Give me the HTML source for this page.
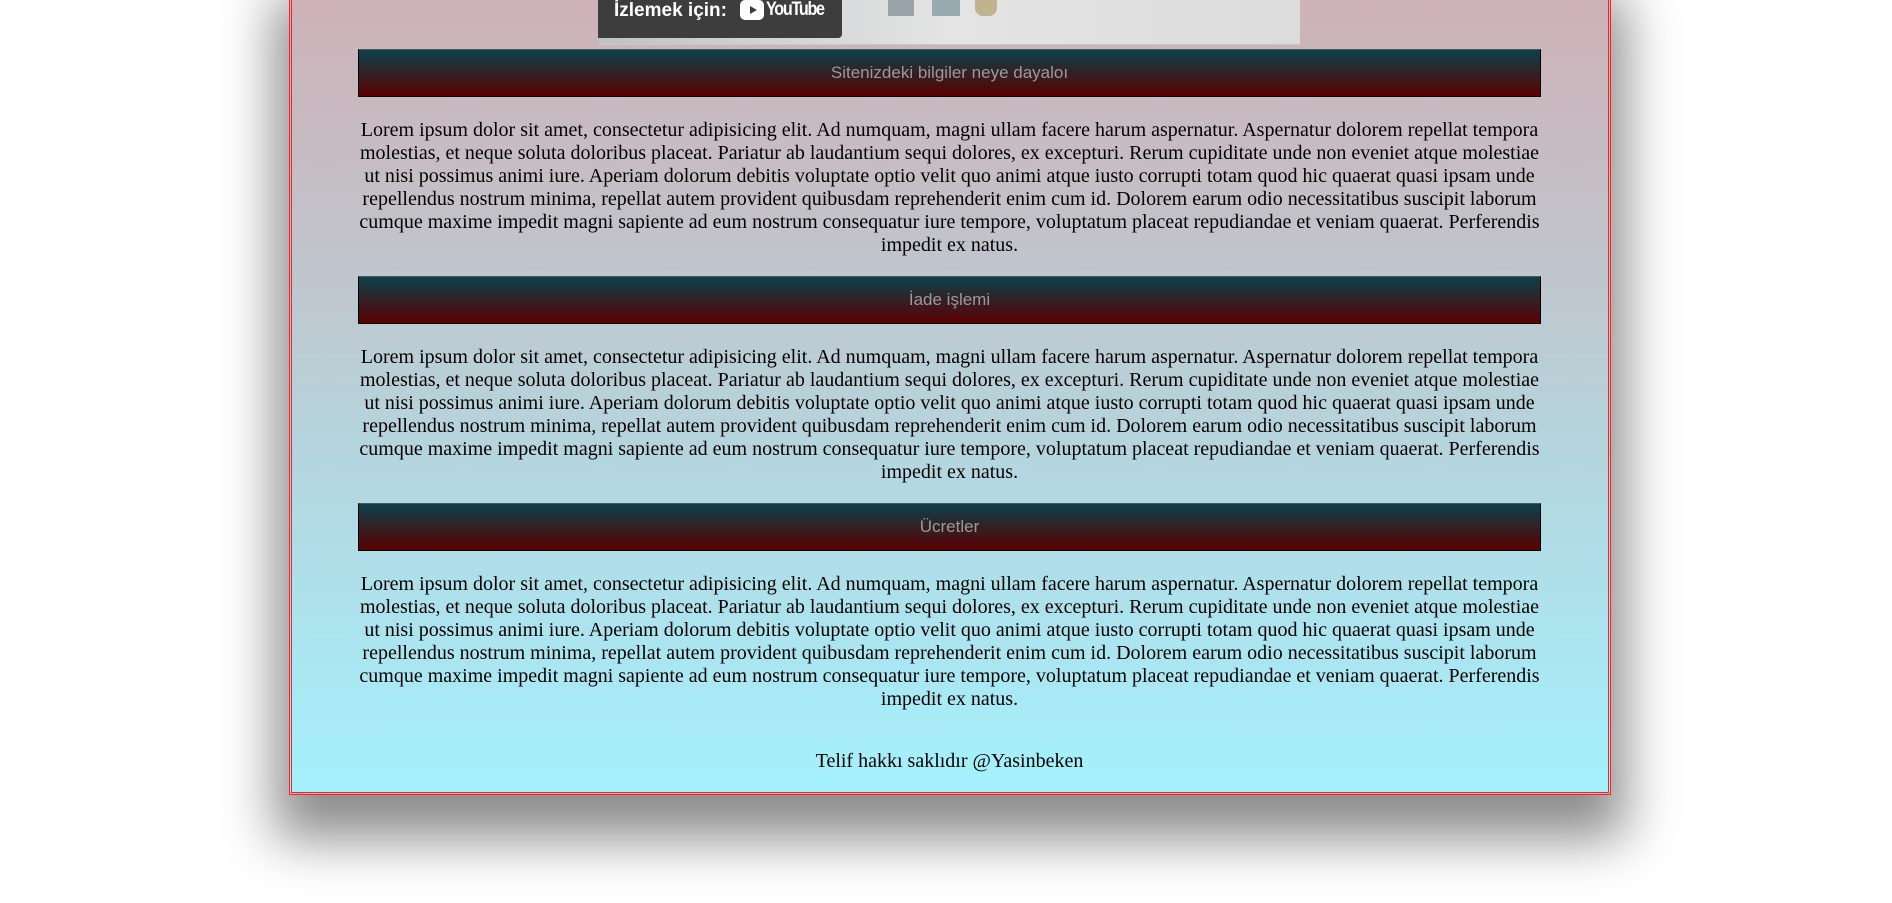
<!DOCTYPE html>
<html><head><meta charset="utf-8"><style>
html,body{margin:0;padding:0;width:1892px;height:903px;overflow:hidden;background:#fff;}
.box{position:absolute;left:289px;top:-20px;width:1316px;height:809px;border:3px double #f22;
background:linear-gradient(to bottom,#ceb0b6 0px,#c2c3ca 260px,#b4d6df 480px,#a4f1fd 809px);
box-shadow:0 30px 50px 14px rgba(0,0,0,0.45);}
.bar{position:absolute;left:358px;width:1181px;height:46px;border:1px solid #000;border-top-color:#555;
background:linear-gradient(to bottom,#0b414a,#5a0000);color:#9a9a9a;font:17px "Liberation Sans",sans-serif;
text-align:center;line-height:46px;}
.p{position:absolute;left:356px;width:1187px;font:20px/22.9px "Liberation Serif",serif;text-align:center;color:#000;}
.thumb{position:absolute;left:598px;top:0;width:702px;height:44px;background:linear-gradient(to right,#bfc2c4,#e4e4e4 50%,#dcdcdc);border-bottom:1px solid #c8c8c8;}
.btn{position:absolute;left:598px;top:0;width:244px;height:38px;background:#3d3d3d;border-radius:0 0 4px 0;color:#fff;font:bold 19px "Liberation Sans",sans-serif;}
</style></head><body>
<div class="box"></div>
<div class="thumb">
<div style="position:absolute;left:290px;top:0;width:26px;height:16px;background:#9aa2aa;"></div>
<div style="position:absolute;left:334px;top:0;width:28px;height:16px;background:#98aab0;"></div>
<div style="position:absolute;left:377px;top:0;width:22px;height:16px;background:#c0b490;border-radius:0 0 8px 8px;"></div>
</div>
<div class="btn"><span style="position:absolute;left:16px;top:0px;">İzlemek için:</span>
<span style="position:absolute;left:142px;top:0px;width:24px;height:20px;background:#fff;border-radius:5px;"></span>
<span style="position:absolute;left:152px;top:6px;width:0;height:0;border-left:7px solid #3d3d3d;border-top:4px solid transparent;border-bottom:4px solid transparent;"></span>
<span style="position:absolute;left:168px;top:-1px;font-size:19px;letter-spacing:-1.5px;transform:scaleX(0.85);transform-origin:left;">YouTube</span></div>

<div class="bar" style="top:49px">Sitenizdeki bilgiler neye dayalоı</div>
<div class="p" style="top:119px">Lorem ipsum dolor sit amet, consectetur adipisicing elit. Ad numquam, magni ullam facere harum aspernatur. Aspernatur dolorem repellat tempora molestias, et neque soluta doloribus placeat. Pariatur ab laudantium sequi dolores, ex excepturi. Rerum cupiditate unde non eveniet atque molestiae ut nisi possimus animi iure. Aperiam dolorum debitis voluptate optio velit quo animi atque iusto corrupti totam quod hic quaerat quasi ipsam unde repellendus nostrum minima, repellat autem provident quibusdam reprehenderit enim cum id. Dolorem earum odio necessitatibus suscipit laborum cumque maxime impedit magni sapiente ad eum nostrum consequatur iure tempore, voluptatum placeat repudiandae et veniam quaerat. Perferendis impedit ex natus.</div>
<div class="bar" style="top:276px">İade işlemi</div>
<div class="p" style="top:346px">Lorem ipsum dolor sit amet, consectetur adipisicing elit. Ad numquam, magni ullam facere harum aspernatur. Aspernatur dolorem repellat tempora molestias, et neque soluta doloribus placeat. Pariatur ab laudantium sequi dolores, ex excepturi. Rerum cupiditate unde non eveniet atque molestiae ut nisi possimus animi iure. Aperiam dolorum debitis voluptate optio velit quo animi atque iusto corrupti totam quod hic quaerat quasi ipsam unde repellendus nostrum minima, repellat autem provident quibusdam reprehenderit enim cum id. Dolorem earum odio necessitatibus suscipit laborum cumque maxime impedit magni sapiente ad eum nostrum consequatur iure tempore, voluptatum placeat repudiandae et veniam quaerat. Perferendis impedit ex natus.</div>
<div class="bar" style="top:503px">Ücretler</div>
<div class="p" style="top:573px">Lorem ipsum dolor sit amet, consectetur adipisicing elit. Ad numquam, magni ullam facere harum aspernatur. Aspernatur dolorem repellat tempora molestias, et neque soluta doloribus placeat. Pariatur ab laudantium sequi dolores, ex excepturi. Rerum cupiditate unde non eveniet atque molestiae ut nisi possimus animi iure. Aperiam dolorum debitis voluptate optio velit quo animi atque iusto corrupti totam quod hic quaerat quasi ipsam unde repellendus nostrum minima, repellat autem provident quibusdam reprehenderit enim cum id. Dolorem earum odio necessitatibus suscipit laborum cumque maxime impedit magni sapiente ad eum nostrum consequatur iure tempore, voluptatum placeat repudiandae et veniam quaerat. Perferendis impedit ex natus.</div>
<div class="p" style="top:750px">Telif hakkı saklıdır @Yasinbeken</div>
</body></html>
